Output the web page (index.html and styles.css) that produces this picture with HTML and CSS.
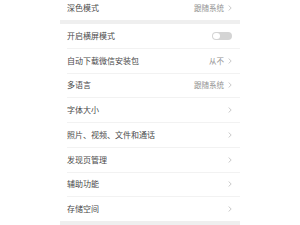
FILE: index.html
```html
<!DOCTYPE html>
<html lang="zh">
<head>
<meta charset="utf-8">
<link rel="stylesheet" href="styles.css">
</head>
<body>
<div class="panel">
  <div class="row first">
    <span class="label">深色模式</span>
    <span class="right"><span class="value">跟随系统</span><svg class="chev" viewBox="0 0 4 6"><polyline points="0.6,0.5 3.2,3 0.6,5.5"/></svg></span>
  </div>
  <div class="band"></div>
  <div class="row">
    <span class="label">开启横屏模式</span>
    <span class="toggle"><span class="knob"></span></span>
  </div>
  <div class="row">
    <span class="label">自动下载微信安装包</span>
    <span class="right"><span class="value">从不</span><svg class="chev" viewBox="0 0 4 6"><polyline points="0.6,0.5 3.2,3 0.6,5.5"/></svg></span>
  </div>
  <div class="row">
    <span class="label">多语言</span>
    <span class="right"><span class="value">跟随系统</span><svg class="chev" viewBox="0 0 4 6"><polyline points="0.6,0.5 3.2,3 0.6,5.5"/></svg></span>
  </div>
  <div class="row">
    <span class="label">字体大小</span>
    <span class="right"><svg class="chev" viewBox="0 0 4 6"><polyline points="0.6,0.5 3.2,3 0.6,5.5"/></svg></span>
  </div>
  <div class="row">
    <span class="label">照片、视频、文件和通话</span>
    <span class="right"><svg class="chev" viewBox="0 0 4 6"><polyline points="0.6,0.5 3.2,3 0.6,5.5"/></svg></span>
  </div>
  <div class="row">
    <span class="label">发现页管理</span>
    <span class="right"><svg class="chev" viewBox="0 0 4 6"><polyline points="0.6,0.5 3.2,3 0.6,5.5"/></svg></span>
  </div>
  <div class="row">
    <span class="label">辅助功能</span>
    <span class="right"><svg class="chev" viewBox="0 0 4 6"><polyline points="0.6,0.5 3.2,3 0.6,5.5"/></svg></span>
  </div>
  <div class="row last">
    <span class="label">存储空间</span>
    <span class="right"><svg class="chev" viewBox="0 0 4 6"><polyline points="0.6,0.5 3.2,3 0.6,5.5"/></svg></span>
  </div>
  <div class="band"></div>
</div>
</body>
</html>
```
FILE: styles.css
```css
html, body {
  margin: 0;
  padding: 0;
  background: #ffffff;
}
body {
  width: 300px;
  height: 225px;
  overflow: hidden;
  font-family: "Noto Sans CJK SC", "Noto Sans", sans-serif;
}
.panel {
  width: 180px;
  margin-left: 60px;
  display: flex;
  flex-direction: column;
}
.row {
  height: 24.75px;
  box-sizing: border-box;
  margin-left: 7px;
  padding-right: 8px;
  display: flex;
  align-items: center;
  justify-content: space-between;
  border-bottom: 1px solid #f2f2f2;
}
.row.first {
  height: 20px;
  padding-bottom: 4px;
  border-bottom: none;
}
.row.last {
  border-bottom: none;
  height: 23.5px;
}
.band {
  height: 4px;
  background: #efefef;
}
.label {
  font-size: 8px;
  line-height: 10px;
  color: #4a4a4a;
}
.right {
  display: flex;
  align-items: center;
  gap: 4px;
}
.value {
  font-size: 7.5px;
  line-height: 10px;
  color: #929292;
}
.chev {
  width: 4px;
  height: 6px;
  fill: none;
  stroke: #bdbdbd;
  stroke-width: 0.8;
}
.toggle {
  width: 20px;
  height: 8px;
  border-radius: 4px;
  background: #d4d4d4;
  display: flex;
  align-items: center;
  padding: 0 1px;
  box-sizing: border-box;
}
.knob {
  width: 6.5px;
  height: 6.5px;
  border-radius: 50%;
  background: #ffffff;
}
```
